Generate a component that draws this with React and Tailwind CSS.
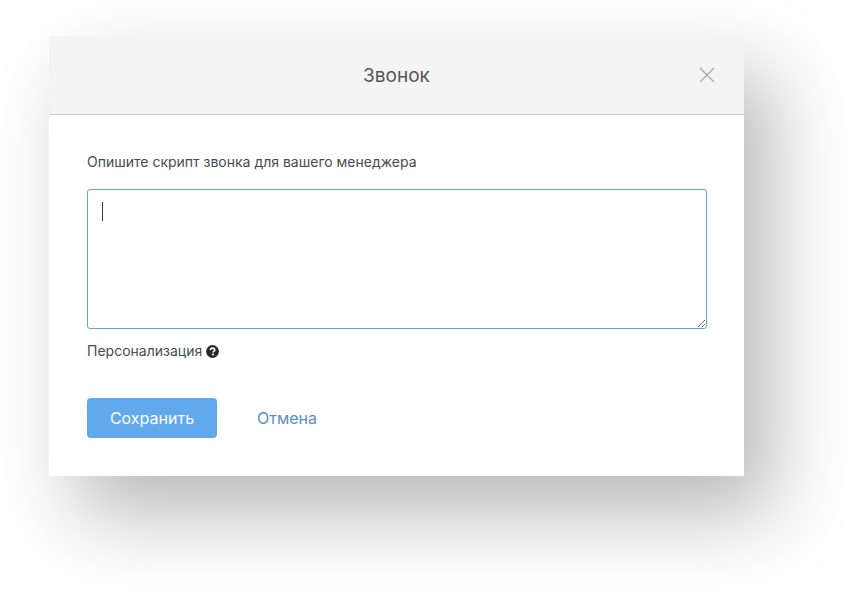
import React from 'react';

export default function App() {
    return (
        <div className="w-[853px] h-[598px] overflow-hidden bg-white pt-[36px] pl-[49px] font-['Inter',sans-serif]">
            <div className="w-[695px] h-[440px] bg-white shadow-[28px_38px_75px_rgba(0,0,0,0.28)]">
                {/* Header */}
                <div className="relative h-[79px] pt-[2px] bg-[#f4f4f4] border-b border-[#c8c8c8] flex items-center justify-center">
                    <h2 className="text-[19px] font-normal text-[#53565a]">Звонок</h2>
                    <button className="absolute right-[29px] top-[31px] text-[#a9acaf]">
                        <svg width="16" height="16" viewBox="0 0 16 16" fill="none" stroke="currentColor" strokeWidth="1.4">
                            <path d="M1 1 L15 15 M15 1 L1 15" />
                        </svg>
                    </button>
                </div>

                {/* Body */}
                <div className="pt-[38px] px-[38px]">
                    <p className="text-[14px] leading-[18px] text-[#484a4e]">Опишите скрипт звонка для вашего менеджера</p>
                    <div className="relative mt-[18px]">
                        <textarea
                            className="block w-[620px] h-[140px] rounded-[3px] border border-[#5aa9ee] bg-white outline-none resize-y"
                        ></textarea>
                        {/* caret, the browser hides the real one in the photo */}
                        <span className="absolute left-[15px] top-[13px] w-[1px] h-[19px] bg-[#2c3e50]"></span>
                    </div>
                    <div className="mt-[13px] flex items-center gap-[4px] text-[14px] leading-[18px] text-[#484a4e]">
                        <span>Персонализация</span>
                        <svg width="13" height="13" viewBox="0 0 13 13">
                            <circle cx="6.5" cy="6.5" r="6.4" fill="#2b2b2b" />
                            <path d="M4.4 5.1 C4.5 3.8 5.4 3.1 6.5 3.1 C7.8 3.1 8.7 3.9 8.7 5 C8.7 6.3 7 6.3 7 7.6" fill="none" stroke="#fff" strokeWidth="1.6" />
                            <rect x="6.1" y="8.6" width="1.8" height="1.7" fill="#fff" />
                        </svg>
                    </div>
                    <div className="mt-[38px] flex items-center">
                        <button className="w-[130px] h-[40px] rounded-[4px] bg-[#62a8ec] text-white text-[16px]">Сохранить</button>
                        <button className="ml-[40px] text-[16px] text-[#5b8cc6]">Отмена</button>
                    </div>
                </div>
            </div>
        </div>
    );
}
